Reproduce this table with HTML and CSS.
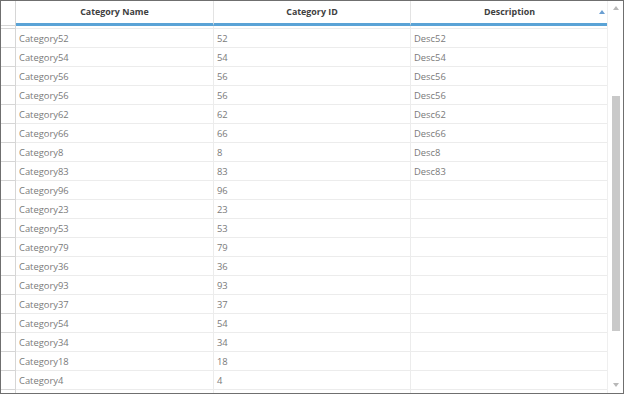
FILE: index.html
```html
<!DOCTYPE html>
<html>
<head>
<meta charset="utf-8">
<link rel="stylesheet" href="styles.css">
</head>
<body>
<div class="grid">
  <div class="main">
    <div class="head">
      <div class="indent"></div>
      <div class="hcell">Category Name</div>
      <div class="hcell">Category ID</div>
      <div class="hcell sorted">Description<span class="sort"></span></div>
    </div>
    <div class="rows" id="rows">
      <div class="row partial"><div class="indent"></div><div class="cell"></div><div class="cell"></div><div class="cell"></div></div>
      <div class="row"><div class="indent"></div><div class="cell">Category52</div><div class="cell">52</div><div class="cell">Desc52</div></div>
      <div class="row"><div class="indent"></div><div class="cell">Category54</div><div class="cell">54</div><div class="cell">Desc54</div></div>
      <div class="row"><div class="indent"></div><div class="cell">Category56</div><div class="cell">56</div><div class="cell">Desc56</div></div>
      <div class="row"><div class="indent"></div><div class="cell">Category56</div><div class="cell">56</div><div class="cell">Desc56</div></div>
      <div class="row"><div class="indent"></div><div class="cell">Category62</div><div class="cell">62</div><div class="cell">Desc62</div></div>
      <div class="row"><div class="indent"></div><div class="cell">Category66</div><div class="cell">66</div><div class="cell">Desc66</div></div>
      <div class="row"><div class="indent"></div><div class="cell">Category8</div><div class="cell">8</div><div class="cell">Desc8</div></div>
      <div class="row"><div class="indent"></div><div class="cell">Category83</div><div class="cell">83</div><div class="cell">Desc83</div></div>
      <div class="row"><div class="indent"></div><div class="cell">Category96</div><div class="cell">96</div><div class="cell"></div></div>
      <div class="row"><div class="indent"></div><div class="cell">Category23</div><div class="cell">23</div><div class="cell"></div></div>
      <div class="row"><div class="indent"></div><div class="cell">Category53</div><div class="cell">53</div><div class="cell"></div></div>
      <div class="row"><div class="indent"></div><div class="cell">Category79</div><div class="cell">79</div><div class="cell"></div></div>
      <div class="row"><div class="indent"></div><div class="cell">Category36</div><div class="cell">36</div><div class="cell"></div></div>
      <div class="row"><div class="indent"></div><div class="cell">Category93</div><div class="cell">93</div><div class="cell"></div></div>
      <div class="row"><div class="indent"></div><div class="cell">Category37</div><div class="cell">37</div><div class="cell"></div></div>
      <div class="row"><div class="indent"></div><div class="cell">Category54</div><div class="cell">54</div><div class="cell"></div></div>
      <div class="row"><div class="indent"></div><div class="cell">Category34</div><div class="cell">34</div><div class="cell"></div></div>
      <div class="row"><div class="indent"></div><div class="cell">Category18</div><div class="cell">18</div><div class="cell"></div></div>
      <div class="row"><div class="indent"></div><div class="cell">Category4</div><div class="cell">4</div><div class="cell"></div></div>
      <div class="row"><div class="indent"></div><div class="cell"></div><div class="cell"></div><div class="cell"></div></div>
    </div>
  </div>
  <div class="scrollbar">
    <div class="arrow up"></div>
    <div class="track"><div class="thumb"></div></div>
    <div class="arrow down"></div>
  </div>
</div>
</body>
</html>
```

FILE: styles.css
```css
html, body {
  margin: 0;
  padding: 0;
  background: #ffffff;
}
.grid {
  width: 624px;
  height: 394px;
  box-sizing: border-box;
  border: 1px solid #6f6f6f;
  display: flex;
  overflow: hidden;
  font-family: "Open Sans", "Noto Sans", sans-serif;
}
.main {
  width: 607px;
  display: flex;
  flex-direction: column;
  overflow: hidden;
}
.head {
  display: grid;
  grid-template-columns: 15px 198px 197px 197px;
  height: 25px;
  flex: none;
}
.head .indent {
  border-right: 1px solid #d6d6d6;
}
.hcell {
  border-right: 1px solid #e3e3e3;
  border-bottom: 3px solid #5aa3d6;
  display: flex;
  align-items: center;
  justify-content: center;
  font-size: 8.9px;
  font-weight: 700;
  color: #404040;
  position: relative;
  padding-bottom: 1px;
}
.hcell:last-child {
  border-right: none;
}
.sort {
  position: absolute;
  right: 3px;
  top: 9px;
  width: 0;
  height: 0;
  border-left: 3.5px solid transparent;
  border-right: 3.5px solid transparent;
  border-bottom: 4px solid #6a9fd2;
}
.rows {
  display: flex;
  flex-direction: column;
}
.row {
  display: grid;
  grid-template-columns: 15px 198px 197px 197px;
  height: 19px;
  flex: none;
}
.row.partial {
  height: 3px;
}
.indent {
  box-sizing: border-box;
  border-right: 1px solid #d6d6d6;
  border-bottom: 1px solid #d6d6d6;
}
.cell {
  box-sizing: border-box;
  border-right: 1px solid #ececec;
  border-bottom: 1px solid #ececec;
  font-size: 9.4px;
  color: #7a7a7a;
  padding-left: 3px;
  display: flex;
  align-items: center;
  white-space: nowrap;
  overflow: hidden;
}
.cell:last-child {
  border-right: none;
}
.scrollbar {
  width: 15px;
  border-left: 1px solid #efefef;
  display: flex;
  flex-direction: column;
  align-items: center;
}
.arrow {
  width: 0;
  height: 0;
  border-left: 3.5px solid transparent;
  border-right: 3.5px solid transparent;
  flex: none;
}
.arrow.up {
  border-bottom: 4px solid #b8b8b8;
  margin-top: 5px;
}
.arrow.down {
  border-top: 4px solid #b8b8b8;
  margin-bottom: 6px;
}
.track {
  flex: 1;
  width: 100%;
  display: flex;
  flex-direction: column;
  align-items: center;
  padding-top: 86px;
}
.thumb {
  width: 8px;
  height: 235px;
  background: #c9c9c9;
}
```
